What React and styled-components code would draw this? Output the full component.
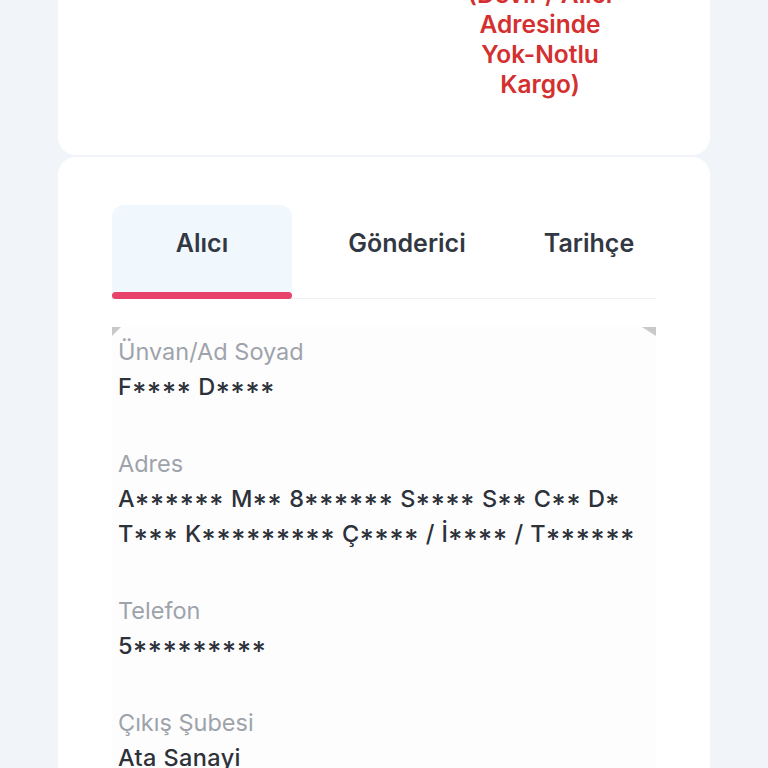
import React from "react";
import styled, { createGlobalStyle } from "styled-components";

const GlobalStyle = createGlobalStyle`
  html, body {
    margin: 0;
    padding: 0;
    background: #f1f5f9;
    font-family: Inter, "Noto Sans", "Liberation Sans", sans-serif;
    overflow: hidden;
  }
`;

const fields = [
  { label: "Ünvan/Ad Soyad", value: "F**** D****" },
  {
    label: "Adres",
    value: "A****** M** 8****** S**** S** C** D* T*** K********* Ç**** / İ**** / T******",
  },
  { label: "Telefon", value: "5*********" },
  { label: "Çıkış Şubesi", value: "Ata Sanayi" },
];

const tabs = ["Alıcı", "Gönderici", "Tarihçe"];

// masked parts (***) get their own span so the stars read bigger
const Masked = ({ text }) =>
  text.split(/(\*+)/).map((part, i) =>
    part.startsWith("*") ? <Stars key={i}>{part}</Stars> : part
  );

export default function App() {
  return (
    <>
      <GlobalStyle />
      <Page>
        <Card.Summary>
          <Card.Side />
          <Card.Status>(Devir / Alıcı Adresinde Yok-Notlu Kargo)</Card.Status>
        </Card.Summary>
        <Card.Detail>
          <Tabs>
            {tabs.map((t, i) => (
              <Tab key={t} $active={i === 0}>
                {t}
              </Tab>
            ))}
          </Tabs>
          <List>
            {fields.map((f) => (
              <Field key={f.label}>
                <Label>{f.label}</Label>
                <Value>
                  <Masked text={f.value} />
                </Value>
              </Field>
            ))}
          </List>
        </Card.Detail>
      </Page>
    </>
  );
}

const Page = styled.div`
  display: flex;
  flex-direction: column;
  gap: 2px;
  padding: 0 58px;
  margin-top: -41px;
`;

const Card = {};
Card.Summary = styled.div`
  display: grid;
  grid-template-columns: 1fr 170px;
  background: #ffffff;
  border-radius: 18px;
  padding: 20px 85px 56px 20px;
`;
Card.Side = styled.div``;
Card.Status = styled.div`
  text-align: center;
  color: #d3302f;
  font-size: 24.5px;
  font-weight: 600;
  line-height: 30px;
`;
Card.Detail = styled.div`
  background: #ffffff;
  border-radius: 18px;
  padding: 48px 54px 0;
  min-height: 700px;
`;

const Tabs = styled.div`
  display: grid;
  grid-template-columns: 180px 230px 1fr;
  padding-bottom: 6px;
  border-bottom: 1px solid #eef0f3;
`;

const Tab = styled.div`
  position: relative;
  height: 87px;
  display: flex;
  align-items: center;
  justify-content: center;
  font-size: 25px;
  font-weight: 600;
  color: #323843;
  border-radius: 12px 12px 0 0;
  background: ${(p) => (p.$active ? "#f0f7fd" : "transparent")};
  padding-bottom: 11px;
  box-sizing: border-box;

  &::after {
    content: "";
    display: ${(p) => (p.$active ? "block" : "none")};
    position: absolute;
    left: 0;
    right: 0;
    top: 100%;
    height: 7px;
    border-radius: 4px;
    background: #e8436a;
  }
`;

const List = styled.div`
  position: relative;
  margin-top: 28px;
  padding: 8px 6px 0;
  background: #fdfdfd;

  &::before,
  &::after {
    content: "";
    position: absolute;
    top: 0;
    width: 0;
    height: 0;
    border-top: 9px solid #c9c9c9;
  }
  &::before {
    left: 0;
    border-right: 9px solid transparent;
  }
  &::after {
    right: 0;
    border-left: 14px solid transparent;
  }
`;

const Field = styled.div`
  display: flex;
  flex-direction: column;
  margin-bottom: 43px;
`;

const Label = styled.div`
  font-size: 23.5px;
  line-height: 34px;
  color: #9ea3ab;
`;

const Value = styled.div`
  font-size: 23.5px;
  line-height: 35px;
  color: #2d313a;
  letter-spacing: 0.4px;
  font-weight: 450;
`;

const Stars = styled.span`
  position: relative;
  top: 0.26em;
  font-size: 1.15em;
  line-height: 0;
  letter-spacing: 0.8px;
`;
